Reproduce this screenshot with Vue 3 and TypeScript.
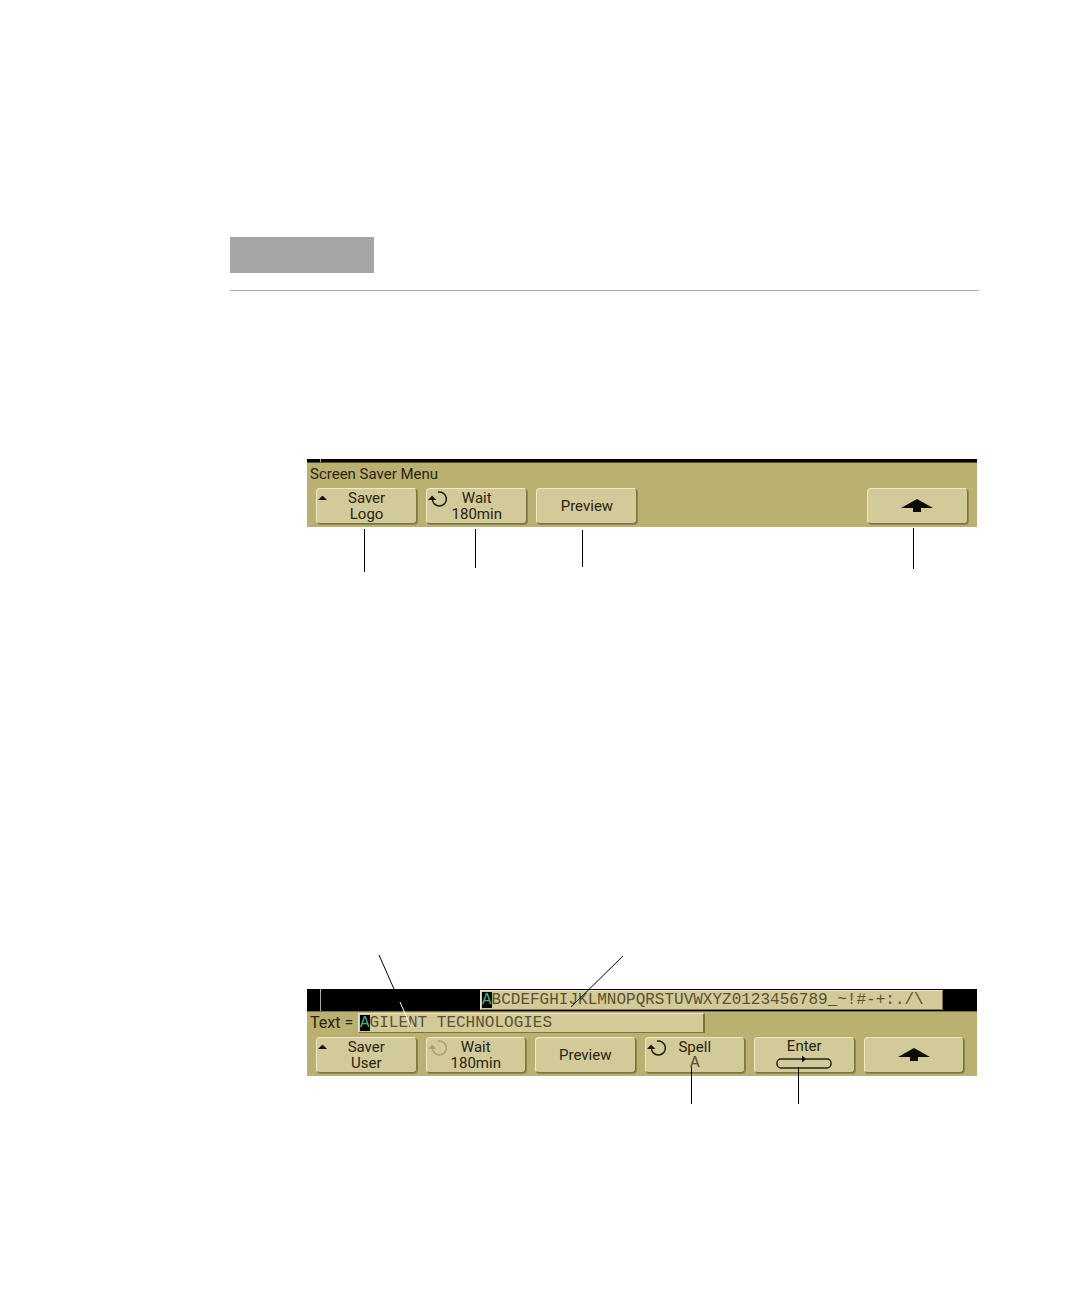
<script setup lang="ts">
import { ref } from 'vue'

type Glyph = 'popup' | 'knob' | 'knob-dim' | 'back' | 'enter' | null

interface Softkey {
  name: string
  lines: string[]
  glyph: Glyph
  valueMono?: boolean
}

const saverKeys: (Softkey | null)[] = [
  { name: 'Saver Logo', lines: ['Saver', 'Logo'], glyph: 'popup' },
  { name: 'Wait 180min', lines: ['Wait', '180min'], glyph: 'knob' },
  { name: 'Preview', lines: ['Preview'], glyph: null },
  null,
  null,
  { name: 'Return', lines: [], glyph: 'back' },
]

const userKeys: (Softkey | null)[] = [
  { name: 'Saver User', lines: ['Saver', 'User'], glyph: 'popup' },
  { name: 'Wait 180min', lines: ['Wait', '180min'], glyph: 'knob-dim' },
  { name: 'Preview', lines: ['Preview'], glyph: null },
  { name: 'Spell A', lines: ['Spell', 'A'], glyph: 'knob', valueMono: true },
  { name: 'Enter', lines: ['Enter'], glyph: 'enter' },
  { name: 'Return', lines: [], glyph: 'back' },
]

const menus = [
  { id: 'saver', keys: saverKeys },
  { id: 'user', keys: userKeys },
]

const userText = ref('AGILENT TECHNOLOGIES')
const remainingChars = 'BCDEFGHIJKLMNOPQRSTUVWXYZ0123456789_~!#-+:./\\'
</script>

<template>
  <main class="page">
    <div class="note-tab"></div>
    <hr class="rule" />

    <section v-for="menu in menus" :key="menu.id" class="figure" :class="menu.id">
      <div class="screen">
        <div class="trace">
          <span class="tick"></span>
          <div v-if="menu.id === 'user'" class="palette"><span class="cursor">A</span>{{ remainingChars }}</div>
        </div>
        <div v-if="menu.id === 'saver'" class="title">Screen Saver Menu</div>
        <div v-else class="entry">
          <label for="user-text">Text =</label>
          <div class="field">
            <input id="user-text" v-model="userText" type="text" spellcheck="false" />
            <span class="cursor" aria-hidden="true">{{ userText.charAt(0) }}</span>
          </div>
        </div>
        <div class="keys">
          <template v-for="(key, i) in menu.keys" :key="i">
            <button v-if="key" type="button" class="key" :aria-label="key.name">
              <svg v-if="key.glyph === 'popup'" class="corner" width="24" height="20" viewBox="0 0 24 20" aria-hidden="true">
                <path d="M1 10 L5 6 H6 L10 10 Z" fill="#111" />
              </svg>
              <svg
                v-else-if="key.glyph === 'knob' || key.glyph === 'knob-dim'"
                class="corner"
                :class="{ dim: key.glyph === 'knob-dim' }"
                width="24" height="20" viewBox="0 0 24 20" aria-hidden="true"
              >
                <path d="M11 2.200 A7 7 0 1 1 5.400 9" fill="none" stroke="currentColor" stroke-width="1.500" />
                <path d="M1 10 L5 5.500 L9.500 10 Z" fill="currentColor" />
              </svg>
              <svg v-if="key.glyph === 'back'" width="32" height="14" viewBox="0 0 32 14" aria-hidden="true">
                <path d="M16 0 L32 9 H20 V13 H12 V9 H0 Z" fill="#0b0b05" />
              </svg>
              <span
                v-for="(line, n) in key.lines"
                :key="n"
                class="line"
                :class="{ mono: key.valueMono && n === 1 }"
              >{{ line }}</span>
              <svg v-if="key.glyph === 'enter'" width="56" height="18" viewBox="0 0 56 18" aria-hidden="true">
                <rect x="1" y="5" width="54" height="9" rx="4" fill="none" stroke="#29240f" stroke-width="1.500" />
                <path d="M26 1.500 L30 5 L26 8.500 Z" fill="#111" />
              </svg>
            </button>
            <span v-else></span>
          </template>
        </div>
      </div>

      <svg v-if="menu.id === 'saver'" class="leaders" viewBox="0 0 670 46" preserveAspectRatio="none" aria-hidden="true">
        <path d="M57.500 2 V45 M168.500 2 V41 M275.500 3 V40 M606.500 1 V42" />
      </svg>
      <svg v-else class="leaders" viewBox="0 0 670 150" preserveAspectRatio="none" aria-hidden="true">
        <path d="M72 0 L87 34 M316 1 L264 52 M384.500 112 V149 M491.500 112 V149" />
        <path class="light" d="M93 47 L104 72" />
      </svg>
    </section>
  </main>
</template>

<style>
body {
  margin: 0;
  background: #fff;
}
</style>

<style scoped>
.page {
  padding: 237px 101px 191px 230px;
  font-family: Roboto, "Liberation Sans", sans-serif;
  font-size: 15px;
  color: #29240f;
}

.note-tab {
  width: 144px;
  height: 36px;
  background: #a5a5a5;
}

.rule {
  height: 1px;
  margin: 17px 0 0;
  border: 0;
  background: #aaa;
}

.figure {
  position: relative;
  margin: 0 2px 0 77px;
}

.figure.saver {
  margin-top: 168px;
}

.figure.user {
  margin-top: 382px;
  padding: 34px 0 29px;
}

.screen {
  background: #bab06f;
}

.trace {
  display: flex;
  box-sizing: border-box;
  height: 4px;
  padding-left: 13px;
  background: #000;
}

.saver .trace {
  border-bottom: 1px solid #55513a;
}

.user .trace {
  height: 23px;
  justify-content: space-between;
  padding-right: 34px;
  border-bottom: 1px solid #77715a;
}

.tick {
  width: 1px;
  background: #aaa;
}

.palette {
  box-sizing: border-box;
  width: 463px;
  height: 20px;
  margin-top: 1px;
  padding: 1px;
  border: 1px solid #ece6c0;
  border-right-color: #7d7440;
  border-bottom-color: #7d7440;
  background: #d2ca99;
}

.palette,
.field,
.mono {
  font-family: "Liberation Mono", monospace;
  font-size: 16px;
  line-height: 16px;
  color: #5a5330;
  white-space: pre;
}

.cursor {
  display: inline-block;
  height: 16px;
  background: #000;
  color: #3fae80;
}

.title {
  height: 25px;
  padding-left: 3px;
  line-height: 22px;
}

.entry {
  display: flex;
  height: 25px;
  padding: 1px 0 0 3px;
  box-sizing: border-box;
}

.entry label {
  width: 48px;
  font-size: 16px;
  line-height: 19px;
  white-space: nowrap;
}

.field {
  position: relative;
  flex: 0 1 347px;
}

.field input {
  display: block;
  box-sizing: border-box;
  width: 100%;
  height: 20px;
  margin: 0;
  padding: 0 1px;
  border: 1px solid #ece6c0;
  border-right: 2px solid #7d7440;
  border-bottom-color: #7d7440;
  border-radius: 0;
  outline: 0;
  background: #d2ca99;
  color: inherit;
  font: inherit;
}

.field .cursor {
  position: absolute;
  top: 2px;
  left: 2px;
}

.keys {
  display: grid;
  grid-template-columns: repeat(6, 1fr);
  gap: 9px;
  padding: 0 9px 3px;
}

.user .keys {
  padding-right: 13px;
}

.key {
  position: relative;
  display: flex;
  flex-direction: column;
  align-items: center;
  justify-content: center;
  box-sizing: border-box;
  height: 36px;
  min-width: 0;
  margin: 0;
  padding: 0;
  border: 1px solid #f0eac4;
  border-right-color: #7d7440;
  border-bottom-color: #7d7440;
  border-radius: 4px;
  box-shadow: 1px 1px 0 #8f864e;
  background: #d2ca99;
  color: #29240f;
  font: inherit;
}

.line {
  line-height: 16px;
}

.corner {
  position: absolute;
  top: 1px;
  left: 0;
  color: #1d1a0a;
}

.corner.dim {
  color: #aaa273;
}

.leaders {
  display: block;
  width: 100%;
  height: 46px;
  fill: none;
  stroke: #000;
  stroke-width: 1;
}

.leaders path {
  vector-effect: non-scaling-stroke;
}

.user .leaders {
  position: absolute;
  inset: 0;
  height: 100%;
  pointer-events: none;
}

.leaders .light {
  stroke: #fff;
}
</style>
